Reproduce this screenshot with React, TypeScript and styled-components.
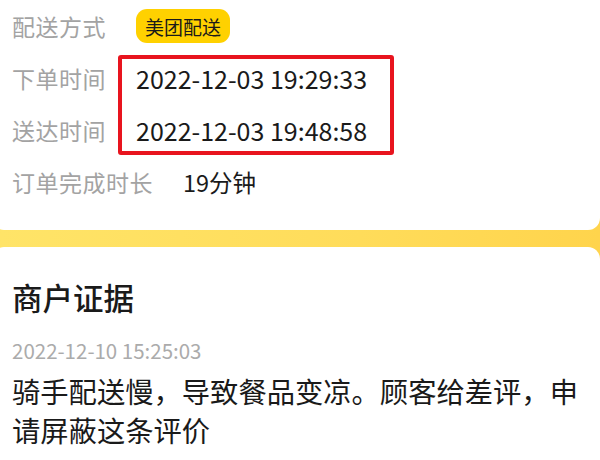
import React from "react";
import styled, { createGlobalStyle } from "styled-components";

const Global = createGlobalStyle`
  html, body { margin: 0; padding: 0; background: #ffffff; }
  body { font-family: "Noto Sans CJK SC", "Noto Sans", sans-serif; overflow: hidden; }
`;

const Page = styled.div`
  width: 600px;
  height: 460px;
  overflow: hidden;
  background: linear-gradient(90deg, #ffe468 0%, #ffdc5a 60%, #ffd44c 100%);
  display: flex;
  flex-direction: column;
  gap: 17px;
`;

const Card = styled.section<{ $top?: boolean }>`
  position: relative;
  background: #ffffff;
  margin-left: -8px;
  width: 608px;
  box-sizing: border-box;
  padding-left: 20px;
  flex: ${(p) => (p.$top ? "0 0 auto" : "1 1 auto")};
  border-radius: ${(p) => (p.$top ? "0 0 12px 12px" : "12px 12px 0 0")};
`;

const InfoList = styled.div`
  display: flex;
  flex-direction: column;
  padding-bottom: 22px;
`;

const Row = styled.div`
  display: flex;
  align-items: center;
  gap: 30px;
  height: 52px;
`;

const Label = styled.span`
  font-size: 23px;
  color: #a3a3a3;
  letter-spacing: 0.5px;
`;

const Value = styled.span`
  font-size: 23.5px;
  color: #1a1a1a;
`;

const DateValue = styled(Value)`
  font-size: 25px;
`;

const Badge = styled.span`
  display: inline-flex;
  align-items: center;
  height: 34px;
  padding: 0 9px;
  background: #ffd100;
  border-radius: 11px;
  font-size: 19px;
  color: #1a1a1a;
`;

const Highlight = styled.div`
  position: absolute;
  left: 126px;
  top: 55px;
  width: 276px;
  height: 100px;
  box-sizing: border-box;
  border: 4px solid #e8141e;
  border-radius: 3px;
  pointer-events: none;
`;

const Evidence = styled.div`
  display: flex;
  flex-direction: column;
  padding-top: 32px;
`;

const Title = styled.h2`
  margin: 0;
  font-size: 30.5px;
  font-weight: 500;
  color: #1a1a1a;
  line-height: 36px;
`;

const Stamp = styled.div`
  margin-top: 22px;
  font-size: 20.5px;
  color: #ababab;
  line-height: 26px;
`;

const Body = styled.p`
  margin: 8px 0 0;
  font-size: 28.3px;
  line-height: 39px;
  color: #1a1a1a;
  padding-right: 10px;
`;

export default function App() {
  return (
    <>
      <Global />
      <Page>
        <Card $top>
          <InfoList>
            <Row>
              <Label>配送方式</Label>
              <Badge>美团配送</Badge>
            </Row>
            <Row>
              <Label>下单时间</Label>
              <DateValue>2022-12-03 19:29:33</DateValue>
            </Row>
            <Row>
              <Label>送达时间</Label>
              <DateValue>2022-12-03 19:48:58</DateValue>
            </Row>
            <Row>
              <Label>订单完成时长</Label>
              <Value>19分钟</Value>
            </Row>
          </InfoList>
          <Highlight />
        </Card>
        <Card>
          <Evidence>
            <Title>商户证据</Title>
            <Stamp>2022-12-10 15:25:03</Stamp>
            <Body>骑手配送慢，导致餐品变凉。顾客给差评，申请屏蔽这条评价</Body>
          </Evidence>
        </Card>
      </Page>
    </>
  );
}
